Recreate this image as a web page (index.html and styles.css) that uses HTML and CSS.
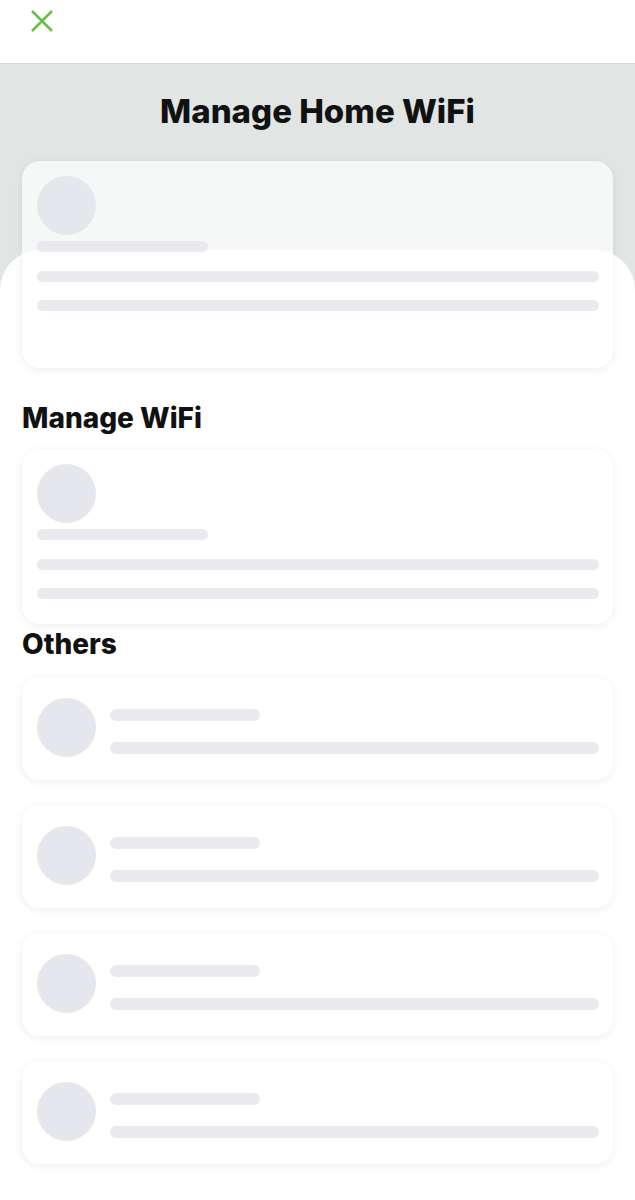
FILE: index.html
```html
<!DOCTYPE html>
<html lang="en">
<head>
  <meta charset="UTF-8" />
  <meta name="viewport" content="width=device-width, initial-scale=1" />
  <title>Manage Home WiFi</title>
  <link rel="stylesheet" href="styles.css">
</head>
<body>

  <div class="top-bar">
    <button class="close-btn" aria-label="Close">
      <svg width="24" height="22" viewBox="0 0 24 22">
        <path d="M2 1 L22 21 M22 1 L2 21" stroke="#6abf4b" stroke-width="2.6" fill="none" />
      </svg>
    </button>
  </div>

  <div class="hero">
    <h1>Manage Home WiFi</h1>
  </div>

  <div class="sheet">
    <div class="card card-big card-first">
      <div class="sk-circle"></div>
      <div class="sk-bar sk-short"></div>
      <div class="sk-bar sk-full"></div>
      <div class="sk-bar sk-full"></div>
    </div>

    <h2>Manage WiFi</h2>

    <div class="card card-big">
      <div class="sk-circle"></div>
      <div class="sk-bar sk-short"></div>
      <div class="sk-bar sk-full"></div>
      <div class="sk-bar sk-full"></div>
    </div>

    <h2 class="others">Others</h2>

    <div class="list">
      <div class="card card-row">
        <div class="sk-circle"></div>
        <div class="row-lines">
          <div class="sk-bar sk-mid"></div>
          <div class="sk-bar sk-full"></div>
        </div>
      </div>
      <div class="card card-row">
        <div class="sk-circle"></div>
        <div class="row-lines">
          <div class="sk-bar sk-mid"></div>
          <div class="sk-bar sk-full"></div>
        </div>
      </div>
      <div class="card card-row">
        <div class="sk-circle"></div>
        <div class="row-lines">
          <div class="sk-bar sk-mid"></div>
          <div class="sk-bar sk-full"></div>
        </div>
      </div>
      <div class="card card-row">
        <div class="sk-circle"></div>
        <div class="row-lines">
          <div class="sk-bar sk-mid"></div>
          <div class="sk-bar sk-full"></div>
        </div>
      </div>
    </div>
  </div>

</body>
</html>
```

FILE: styles.css
```css
body {
  margin: 0;
  font-family: Inter, "Noto Sans", Arial, sans-serif;
  background: #ffffff;
  color: #111;
}

.top-bar {
  height: 63px;
  background: #fff;
  border-bottom: 1px solid #d6d9d8;
  display: flex;
  align-items: flex-start;
  padding-left: 30px;
}

.close-btn {
  background: none;
  border: none;
  padding: 0;
  margin-top: 10px;
  cursor: pointer;
  display: flex;
}

/* gray block runs under the sheet's rounded corners */
.hero {
  height: 226px;
  background: #e1e5e4;
  display: flex;
  justify-content: center;
}

h1 {
  margin: 27px 0 0;
  font-size: 33px;
  font-weight: 800;
  line-height: 40px;
  letter-spacing: 0;
}

.sheet {
  margin-top: -40px;
  background: #fff;
  border-radius: 40px 40px 0 0;
  display: flex;
  flex-direction: column;
  padding: 0 22px 30px;
}

.card {
  background: rgba(255, 255, 255, 0.7);
  border-radius: 18px;
  box-shadow: 0 2px 8px rgba(0, 0, 0, 0.07);
}

.card-big {
  padding: 15px 14px 25px 15px;
  display: flex;
  flex-direction: column;
}

.card-first {
  margin-top: -89px;
  padding-bottom: 57px;
}

.sk-circle {
  width: 59px;
  height: 59px;
  border-radius: 50%;
  background: #e5e7ec;
  flex-shrink: 0;
}

.sk-bar {
  height: 11px;
  border-radius: 6px;
  background: #e8eaee;
}

.card-big .sk-short {
  width: 171px;
  margin-top: 6px;
}

.card-big .sk-full {
  margin-top: 19px;
}

.card-big .sk-full + .sk-full {
  margin-top: 18px;
}

h2 {
  margin: 34px 0 15px;
  font-size: 28px;
  font-weight: 800;
  line-height: 32px;
}

h2.others {
  margin: 4px 0 17px;
}

.list {
  display: flex;
  flex-direction: column;
  gap: 25px;
}

.card-row {
  height: 103px;
  box-sizing: border-box;
  padding: 21px 14px 0 15px;
  display: flex;
  align-items: flex-start;
  gap: 14px;
}

.row-lines {
  flex: 1;
  padding-top: 11px;
  display: flex;
  flex-direction: column;
  gap: 21px;
}

.row-lines .sk-bar {
  height: 12px;
}

.sk-mid {
  width: 150px;
}
```
